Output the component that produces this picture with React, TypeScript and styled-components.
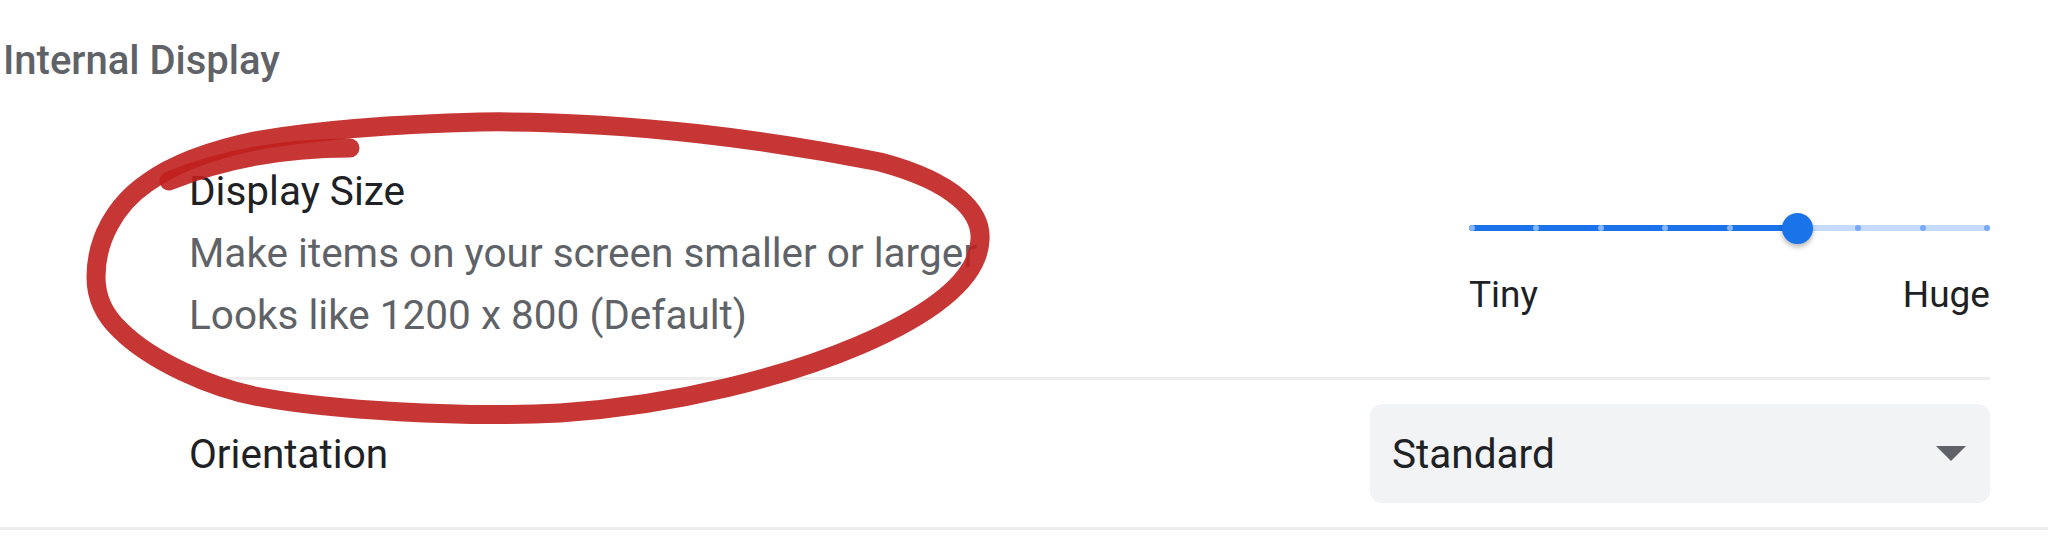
import React from "react";
import styled, { createGlobalStyle } from "styled-components";

const GlobalStyle = createGlobalStyle`
  * {
    box-sizing: border-box;
  }
  body {
    margin: 0;
    background: #ffffff;
    font-family: Roboto, "Liberation Sans", Arial, sans-serif;
  }
`;

const TICKS = 9;
const VALUE = 5;

const App = () => {
  const pct = (VALUE / (TICKS - 1)) * 100;

  return (
    <>
      <GlobalStyle />
      <Page>
        <SectionTitle>Internal Display</SectionTitle>
        <Section>
          <List>
            <Row $top>
              <TextBlock>
                <Label>Display Size</Label>
                <Secondary>Make items on your screen smaller or larger</Secondary>
                <Secondary>Looks like 1200 x 800 (Default)</Secondary>
              </TextBlock>
              <Slider>
                <Rail>
                  <Track>
                    <Fill style={{ width: `${pct}%` }} />
                    <Ticks>
                      {Array.from({ length: TICKS }).map((_, i) => (
                        <Tick key={i} $active={i < VALUE} />
                      ))}
                    </Ticks>
                    <Knob style={{ left: `${pct}%` }} />
                  </Track>
                </Rail>
                <SliderLabels>
                  <span>Tiny</span>
                  <span>Huge</span>
                </SliderLabels>
              </Slider>
            </Row>
            <Row>
              <Label>Orientation</Label>
              <Select>
                <span>Standard</span>
                <Arrow />
              </Select>
            </Row>
          </List>
        </Section>

        {/* hand drawn red circle over the display size row */}
        <Annotation viewBox="0 0 2048 540">
          <path
            d="M 96 277
               C 96 240, 115 205, 147 183
               C 165 170, 200 152, 260 140
               C 320 130, 400 124, 480 122
               C 630 120, 780 142, 880 162
               C 955 182, 982 212, 980 240
               C 978 280, 930 315, 860 345
               C 790 375, 680 405, 560 413
               C 460 418, 330 410, 260 397
               C 210 388, 150 360, 120 330
               C 104 315, 96 297, 96 277 Z"
          />
          <path d="M 169 181 Q 250 148, 350 148" />
        </Annotation>
      </Page>
    </>
  );
};

const Page = styled.div`
  position: relative;
  width: 2048px;
  height: 540px;
  overflow: hidden;
  padding-top: 30px;
`;

const SectionTitle = styled.h2`
  margin: 0 0 37px;
  padding-left: 3px;
  font-size: 40px;
  line-height: 62px;
  font-weight: 500;
  color: #5f6368;
`;

const Section = styled.div`
  border-bottom: 3px solid #eeeeee;
`;

const List = styled.div`
  padding: 0 58px 0 189px;
`;

const Row = styled.div<{ $top?: boolean }>`
  display: flex;
  justify-content: space-between;
  align-items: ${(p) => (p.$top ? "flex-start" : "center")};
  padding: ${(p) => (p.$top ? "31px 0" : "0")};
  min-height: 150px;

  & + & {
    border-top: 3px solid #eeeeee;
  }
`;

const TextBlock = styled.div`
  display: flex;
  flex-direction: column;
`;

const Label = styled.div`
  font-size: 40.5px;
  line-height: 62px;
  color: #202124;
`;

const Secondary = styled.div`
  font-size: 40.5px;
  line-height: 62px;
  color: #5f6368;
`;

const Slider = styled.div`
  width: 521px;
  margin-top: 48px;
`;

const Rail = styled.div`
  height: 40px;
  display: flex;
  align-items: center;
`;

const Track = styled.div`
  position: relative;
  width: 100%;
  height: 6px;
  border-radius: 3px;
  background: #c6dafc;
`;

const Fill = styled.div`
  position: absolute;
  left: 0;
  top: 0;
  bottom: 0;
  border-radius: 3px;
  background: #1a73e8;
`;

const Ticks = styled.div`
  position: absolute;
  inset: 0;
  display: flex;
  justify-content: space-between;
  align-items: center;
`;

const Tick = styled.div<{ $active?: boolean }>`
  width: 6px;
  height: 6px;
  border-radius: 50%;
  background: ${(p) => (p.$active ? "#8ab4f8" : "#79a9f5")};
`;

const Knob = styled.div`
  position: absolute;
  top: 50%;
  width: 31px;
  height: 31px;
  margin: -15.5px 0 0 -12.5px;
  border-radius: 50%;
  background: #1a73e8;
  box-shadow: 0 3px 5px rgba(0, 0, 0, 0.28);
`;

const SliderLabels = styled.div`
  display: flex;
  justify-content: space-between;
  margin-top: 22px;
  font-size: 37px;
  line-height: 50px;
  color: #202124;
`;

const Select = styled.div`
  width: 620px;
  height: 99px;
  display: flex;
  align-items: center;
  justify-content: space-between;
  padding: 0 24px 0 22px;
  border-radius: 12px;
  background: #f1f3f4;
  font-size: 40.5px;
  color: #202124;
`;

const Arrow = styled.div`
  width: 0;
  height: 0;
  border-left: 15px solid transparent;
  border-right: 15px solid transparent;
  border-top: 15px solid #5f6368;
`;

const Annotation = styled.svg`
  position: absolute;
  left: 0;
  top: 0;
  width: 2048px;
  height: 540px;
  pointer-events: none;

  path {
    fill: none;
    stroke: rgb(192, 32, 30);
    stroke-opacity: 0.9;
    stroke-width: 19;
    stroke-linecap: round;
    stroke-linejoin: round;
  }
`;

export default App;
